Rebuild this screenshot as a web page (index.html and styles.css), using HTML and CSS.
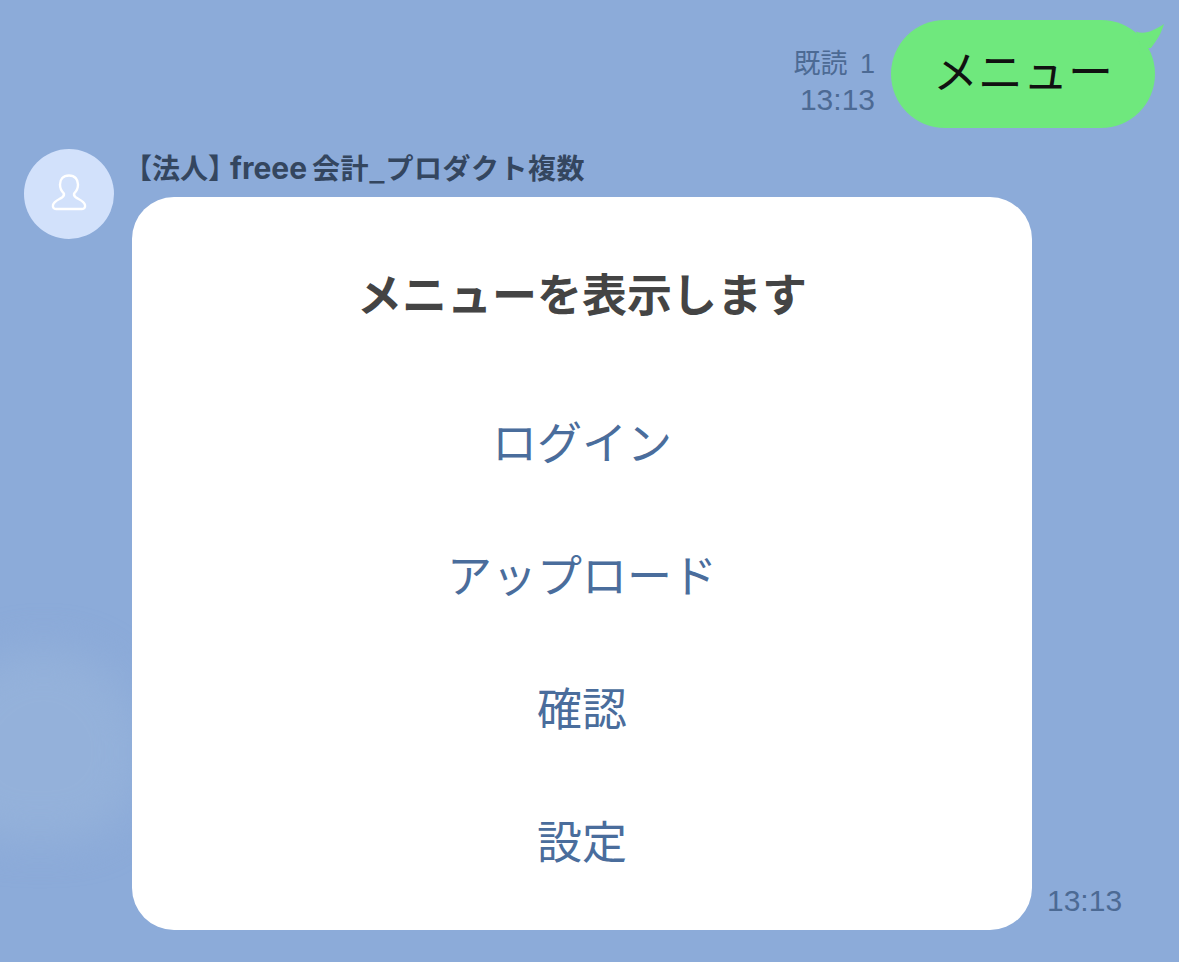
FILE: index.html
```html
<!DOCTYPE html>
<html lang="ja">
<head>
<meta charset="utf-8">
<title>メニュー</title>
<link rel="stylesheet" href="styles.css">
</head>
<body>
<div class="cloud"></div>
<main class="chat">
  <section class="sent">
    <div class="meta">
      <span class="read">既読 1</span>
      <span class="meta-time">13:13</span>
    </div>
    <div class="bubble">
      <span class="bubble-text">メニュー</span>
      <svg class="tail" viewBox="0 0 40 36" aria-hidden="true"><path d="M5 11.5 C14 15 24 10 33 4 C30 14 26 20 20 28 L10 28 Z" fill="#6fe87d"/></svg>
    </div>
  </section>
  <section class="received">
    <div class="avatar">
      <svg viewBox="0 0 40 40" width="40" height="40" aria-hidden="true"><path d="M20 1.5 C14 1.5 11 5.5 11 10.5 C11 14 12.5 17 14.5 19 C15.5 20.5 15 22 13 23.5 C10 25.5 5 27 4 31 C3.5 33.8 5 35 7 35 L33 35 C35 35 36.5 33.8 36 31 C35 27 30 25.5 27 23.5 C25 22 24.5 20.5 25.5 19 C27.5 17 29 14 29 10.5 C29 5.5 26 1.5 20 1.5 Z" fill="none" stroke="#fff" stroke-width="2.4"/></svg>
    </div>
    <div class="content">
      <h2 class="name"><span class="bracket">【法人】</span><span class="latin">freee</span><span class="rest">会計_プロダクト複数</span></h2>
      <div class="message">
        <div class="card">
          <h1 class="title">メニューを表示します</h1>
          <a class="item">ログイン</a>
          <a class="item">アップロード</a>
          <a class="item">確認</a>
          <a class="item">設定</a>
        </div>
        <span class="time">13:13</span>
      </div>
    </div>
  </section>
</main>
</body>
</html>
```
FILE: styles.css
```css
* { box-sizing: border-box; }
html, body { margin: 0; height: 100%; }
body {
  position: relative;
  height: 962px;
  overflow: hidden;
  background: #8cabd9;
  font-family: "Noto Sans CJK JP", "Noto Sans", sans-serif;
}
.cloud {
  position: absolute;
  left: -60px;
  top: 650px;
  width: 200px;
  height: 190px;
  border-radius: 60% 55% 45% 45%;
  background: #94b1da;
  filter: blur(20px);
}
.chat {
  position: relative;
  display: flex;
  flex-direction: column;
  padding-top: 20px;
}
.sent {
  display: flex;
  justify-content: flex-end;
  align-items: center;
  gap: 16px;
  padding-right: 24px;
}
.meta {
  display: flex;
  flex-direction: column;
  align-items: flex-end;
  color: #4c6a94;
  font-family: "Liberation Sans", "Noto Sans CJK JP", sans-serif;
  padding-top: 16px;
}
.read { font-size: 27px; line-height: 36px; word-spacing: 5px; }
.meta-time { font-size: 30px; line-height: 36px; }
.bubble {
  position: relative;
  width: 264px;
  height: 108px;
  border-radius: 54px;
  background: #6fe87d;
  color: #111;
  font-size: 45px;
  line-height: 100px;
  text-align: center;
}
.tail {
  position: absolute;
  left: 240px;
  top: 0;
  width: 40px;
  height: 36px;
}
.received {
  display: flex;
  align-items: flex-start;
  gap: 18px;
  padding-left: 24px;
  margin-top: 21px;
}
.avatar {
  flex: none;
  width: 90px;
  height: 90px;
  border-radius: 50%;
  background: #d2e1fb;
  display: flex;
  align-items: center;
  justify-content: center;
}
.content { display: flex; flex-direction: column; }
.name {
  margin: 0;
  height: 48px;
  font-size: 28px;
  line-height: 36px;
  font-weight: 700;
  color: #34465f;
  white-space: nowrap;
  display: flex;
  align-items: baseline;
}
.bracket { margin-left: -8px; margin-right: -6px; }
.latin {
  font-family: "Inter", sans-serif;
  font-size: 30px;
  margin-right: 5px;
}
.rest { letter-spacing: 0.5px; }
.message {
  display: flex;
  align-items: flex-end;
  gap: 15px;
}
.card {
  width: 900px;
  height: 733px;
  border-radius: 42px;
  background: #fff;
  display: flex;
  flex-direction: column;
  align-items: center;
  padding-top: 62px;
}
.title {
  margin: 0 0 47px;
  height: 68px;
  font-size: 45px;
  line-height: 68px;
  font-weight: 700;
  color: #444;
}
.item {
  height: 133px;
  font-size: 45px;
  line-height: 133px;
  color: #4a6d9c;
}
.time {
  font-family: "Liberation Sans", sans-serif;
  font-size: 30px;
  line-height: 36px;
  color: #4c6a94;
  margin-bottom: 11px;
}
```
